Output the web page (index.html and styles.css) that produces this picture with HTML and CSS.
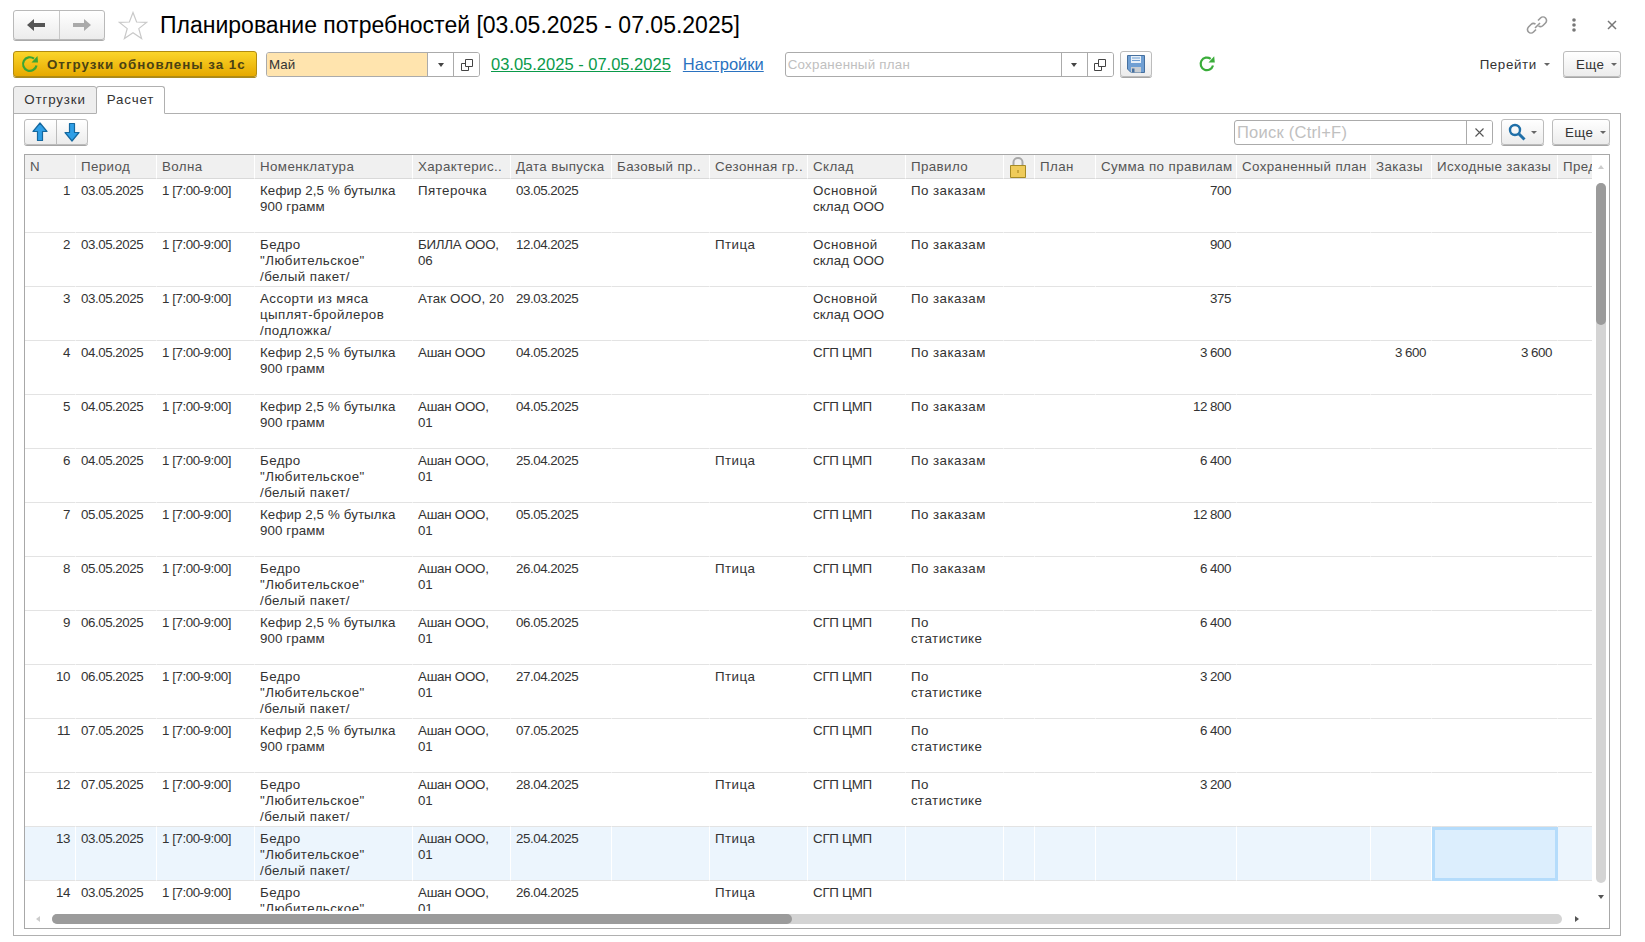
FILE: index.html
```html
<!DOCTYPE html>
<html lang="ru">

<head>
    <meta charset="UTF-8">
    <title>Планирование потребностей</title>
    <link rel="stylesheet" href="styles.css">
</head>

<body>
    <div class="top">
        <div class="navGroup">
            <button class="navBtn">
                <svg width="20" height="14" viewBox="0 0 20 14"><path d="M1 7 8 1v4h11v4H8v4z" fill="#555"/></svg>
            </button>
            <button class="navBtn">
                <svg width="20" height="14" viewBox="0 0 20 14"><path d="M19 7 12 1v4H1v4h11v4z" fill="#aaa"/></svg>
            </button>
        </div>
        <svg class="star" width="30" height="29" viewBox="0 0 30 29"><path d="M15 1.5 18.6 11 28.8 11.3 20.8 17.6 23.6 27.5 15 21.8 6.4 27.5 9.2 17.6 1.2 11.3 11.4 11z" fill="#fff" stroke="#c9c9c9" stroke-width="1.2"/></svg>
        <h1 class="title">Планирование потребностей [03.05.2025 - 07.05.2025]</h1>
        <div class="topIcons">
            <svg width="22" height="20" viewBox="0 0 22 20" fill="none" stroke="#999" stroke-width="1.6"><path d="M9 13 14 8"/><path d="M12 5.5 14.5 3a3.5 3.5 0 0 1 5 5L17 10.500a3.500 3.500 0 0 1-4.500.3"/><path d="M10 14.500 7.500 17a3.500 3.500 0 0 1-5-5L5 9.500a3.500 3.500 0 0 1 4.500-.3"/></svg>
            <svg width="4" height="14" viewBox="0 0 4 14" fill="#777"><circle cx="2" cy="2" r="1.800"/><circle cx="2" cy="7" r="1.800"/><circle cx="2" cy="12" r="1.800"/></svg>
            <svg class="closeIcon" width="10" height="10" viewBox="0 0 10 10" stroke="#777" stroke-width="1.500"><path d="M1 1 9 9M9 1 1 9"/></svg>
        </div>
    </div>

    <div class="toolbar">
        <button class="btnYellow">
            <svg width="18" height="18" viewBox="0 0 18 18" fill="none"><path d="M15.500 10.500A6.800 6.800 0 1 1 13 3.700" stroke="#3aa535" stroke-width="2.200"/><path d="M10.500 7.500 17 7.500 16.500 1z" fill="#3aa535"/></svg>
            Отгрузки обновлены за 1с
        </button>
        <div class="field fieldMay">
            <span class="fieldText">Май</span>
            <span class="fieldBtn"><i class="caret dark"></i></span>
            <span class="fieldBtn copy"><svg width="14" height="14" viewBox="0 0 14 14" fill="#fff" stroke="#444"><path d="M1.500 5.500h7v7h-7z"/><path d="M5.500 1.500h7v7h-7z"/></svg></span>
        </div>
        <a class="link green" href="#">03.05.2025 - 07.05.2025</a>
        <a class="link blue" href="#">Настройки</a>
        <div class="field fieldPlan">
            <span class="fieldText hint">Сохраненный план</span>
            <span class="fieldBtn"><i class="caret dark"></i></span>
            <span class="fieldBtn copy"><svg width="14" height="14" viewBox="0 0 14 14" fill="#fff" stroke="#444"><path d="M1.500 5.500h7v7h-7z"/><path d="M5.500 1.500h7v7h-7z"/></svg></span>
        </div>
        <button class="btn btnSave">
            <svg width="18" height="18" viewBox="0 0 18 18"><path d="M.5.500h17v17H4L.5 14z" fill="#6f9fd3" stroke="#46709f"/><path d="M4 1h10v7H4z" fill="#e6eff8"/><path d="M5 3h8M5 5.500h8" stroke="#6f9fd3"/><path d="M4 12h10v5.500H4z" fill="#c9ced3"/><path d="M5 13.500h2.500v4H5z" fill="#46709f"/></svg>
        </button>
        <svg class="refresh" width="18" height="18" viewBox="0 0 18 18" fill="none"><path d="M15 10.500A6.300 6.300 0 1 1 12.700 3.800" stroke="#3aad3a" stroke-width="2.200"/><path d="M10.500 7.500 16.800 7.500 16.200 1.300z" fill="#3aad3a"/></svg>
        <span class="goTo">Перейти <i class="caret"></i></span>
        <button class="btn btnMore">Еще <i class="caret"></i></button>
    </div>

    <div class="tabs">
        <div class="tab">Отгрузки</div>
        <div class="tab tabActive">Расчет</div>
    </div>

    <div class="panel">
        <div class="panelBar">
            <div class="arrowGroup">
                <button class="arrowBtn">
                    <svg width="16" height="20" viewBox="0 0 16 20"><path d="M8 1 15 9.500h-4.500v9h-5v-9H1z" fill="#2f9fe6" stroke="#14689f" stroke-width="1.200" stroke-linejoin="round"/></svg>
                </button>
                <button class="arrowBtn">
                    <svg width="16" height="20" viewBox="0 0 16 20"><path d="M8 19 15 10.500h-4.500v-9h-5v9H1z" fill="#2f9fe6" stroke="#14689f" stroke-width="1.200" stroke-linejoin="round"/></svg>
                </button>
            </div>
            <div class="field fieldSearch">
                <span class="fieldText hint">Поиск (Ctrl+F)</span>
                <span class="fieldBtn clear"><svg width="9" height="9" viewBox="0 0 9 9" stroke="#555" stroke-width="1.100"><path d="M.5.500l8 8M8.500.500l-8 8"/></svg></span>
            </div>
            <button class="btn btnSearch">
                <svg width="18" height="18" viewBox="0 0 18 18" fill="none" stroke="#1f6fa8"><circle cx="7" cy="7" r="5" stroke-width="2.400"/><path d="M11 11 16.500 16.500" stroke-width="3"/></svg>
                <i class="caret"></i>
            </button>
            <button class="btn btnMore">Еще <i class="caret"></i></button>
        </div>

        <div class="grid">
            <div class="tableWrap">
                <table class="tbl">
                    <colgroup>
                        <col class="c51"><col class="c81"><col class="c98"><col class="c158"><col class="c98"><col class="c101"><col class="c98"><col class="c98"><col class="c98"><col class="c98"><col class="c31"><col class="c61"><col class="c141"><col class="c134"><col class="c61"><col class="c126"><col class="c100">
                    </colgroup>
                    <thead>
                        <tr>
                            <th>N</th><th>Период</th><th>Волна</th><th>Номенклатура</th><th>Характерис..</th><th>Дата выпуска</th><th>Базовый пр..</th><th>Сезонная гр..</th><th>Склад</th><th>Правило</th>
                            <th class="lockCell"><svg width="16" height="21" viewBox="0 0 16 21"><path d="M3.500 9V5a4.500 4 0 0 1 9 0v4" fill="none" stroke="#a8a8a8" stroke-width="2"/><path d="M.5 8.500h15v12H.5z" fill="#efcb5a" stroke="#a58a25"/><path d="M7 13h2v3H7z" fill="#c9a53a"/></svg></th>
                            <th>План</th><th>Сумма по правилам</th><th>Сохраненный план</th><th>Заказы</th><th>Исходные заказы</th><th>Предзаказы</th>
                        </tr>
                    </thead>
                    <tbody>
                        <tr><td class="num">1</td><td class="dg">03.05.2025</td><td class="dg">1 [7:00-9:00]</td><td class="kf">Кефир 2,5 % бутылка<br>900 грамм</td><td>Пятерочка</td><td class="dg">03.05.2025</td><td></td><td></td><td>Основной<br><span class="kf">склад ООО</span></td><td>По заказам</td><td></td><td></td><td class="num">700</td><td></td><td></td><td></td><td></td></tr>
                        <tr><td class="num">2</td><td class="dg">03.05.2025</td><td class="dg">1 [7:00-9:00]</td><td>Бедро<br>"Любительское"<br>/белый пакет/</td><td class="up">БИЛЛА ООО,<br>06</td><td class="dg">12.04.2025</td><td></td><td>Птица</td><td>Основной<br><span class="kf">склад ООО</span></td><td>По заказам</td><td></td><td></td><td class="num">900</td><td></td><td></td><td></td><td></td></tr>
                        <tr><td class="num">3</td><td class="dg">03.05.2025</td><td class="dg">1 [7:00-9:00]</td><td>Ассорти из мяса<br>цыплят-бройлеров<br>/подложка/</td><td class="kf">Атак ООО, 20</td><td class="dg">29.03.2025</td><td></td><td></td><td>Основной<br><span class="kf">склад ООО</span></td><td>По заказам</td><td></td><td></td><td class="num">375</td><td></td><td></td><td></td><td></td></tr>
                        <tr><td class="num">4</td><td class="dg">04.05.2025</td><td class="dg">1 [7:00-9:00]</td><td class="kf">Кефир 2,5 % бутылка<br>900 грамм</td><td class="up">Ашан ООО</td><td class="dg">04.05.2025</td><td></td><td></td><td class="up">СГП ЦМП</td><td>По заказам</td><td></td><td></td><td class="num">3 600</td><td></td><td class="num">3 600</td><td class="num">3 600</td><td></td></tr>
                        <tr><td class="num">5</td><td class="dg">04.05.2025</td><td class="dg">1 [7:00-9:00]</td><td class="kf">Кефир 2,5 % бутылка<br>900 грамм</td><td class="up">Ашан ООО,<br>01</td><td class="dg">04.05.2025</td><td></td><td></td><td class="up">СГП ЦМП</td><td>По заказам</td><td></td><td></td><td class="num">12 800</td><td></td><td></td><td></td><td></td></tr>
                        <tr><td class="num">6</td><td class="dg">04.05.2025</td><td class="dg">1 [7:00-9:00]</td><td>Бедро<br>"Любительское"<br>/белый пакет/</td><td class="up">Ашан ООО,<br>01</td><td class="dg">25.04.2025</td><td></td><td>Птица</td><td class="up">СГП ЦМП</td><td>По заказам</td><td></td><td></td><td class="num">6 400</td><td></td><td></td><td></td><td></td></tr>
                        <tr><td class="num">7</td><td class="dg">05.05.2025</td><td class="dg">1 [7:00-9:00]</td><td class="kf">Кефир 2,5 % бутылка<br>900 грамм</td><td class="up">Ашан ООО,<br>01</td><td class="dg">05.05.2025</td><td></td><td></td><td class="up">СГП ЦМП</td><td>По заказам</td><td></td><td></td><td class="num">12 800</td><td></td><td></td><td></td><td></td></tr>
                        <tr><td class="num">8</td><td class="dg">05.05.2025</td><td class="dg">1 [7:00-9:00]</td><td>Бедро<br>"Любительское"<br>/белый пакет/</td><td class="up">Ашан ООО,<br>01</td><td class="dg">26.04.2025</td><td></td><td>Птица</td><td class="up">СГП ЦМП</td><td>По заказам</td><td></td><td></td><td class="num">6 400</td><td></td><td></td><td></td><td></td></tr>
                        <tr><td class="num">9</td><td class="dg">06.05.2025</td><td class="dg">1 [7:00-9:00]</td><td class="kf">Кефир 2,5 % бутылка<br>900 грамм</td><td class="up">Ашан ООО,<br>01</td><td class="dg">06.05.2025</td><td></td><td></td><td class="up">СГП ЦМП</td><td>По<br>статистике</td><td></td><td></td><td class="num">6 400</td><td></td><td></td><td></td><td></td></tr>
                        <tr><td class="num">10</td><td class="dg">06.05.2025</td><td class="dg">1 [7:00-9:00]</td><td>Бедро<br>"Любительское"<br>/белый пакет/</td><td class="up">Ашан ООО,<br>01</td><td class="dg">27.04.2025</td><td></td><td>Птица</td><td class="up">СГП ЦМП</td><td>По<br>статистике</td><td></td><td></td><td class="num">3 200</td><td></td><td></td><td></td><td></td></tr>
                        <tr><td class="num">11</td><td class="dg">07.05.2025</td><td class="dg">1 [7:00-9:00]</td><td class="kf">Кефир 2,5 % бутылка<br>900 грамм</td><td class="up">Ашан ООО,<br>01</td><td class="dg">07.05.2025</td><td></td><td></td><td class="up">СГП ЦМП</td><td>По<br>статистике</td><td></td><td></td><td class="num">6 400</td><td></td><td></td><td></td><td></td></tr>
                        <tr><td class="num">12</td><td class="dg">07.05.2025</td><td class="dg">1 [7:00-9:00]</td><td>Бедро<br>"Любительское"<br>/белый пакет/</td><td class="up">Ашан ООО,<br>01</td><td class="dg">28.04.2025</td><td></td><td>Птица</td><td class="up">СГП ЦМП</td><td>По<br>статистике</td><td></td><td></td><td class="num">3 200</td><td></td><td></td><td></td><td></td></tr>
                        <tr class="current"><td class="num">13</td><td class="dg">03.05.2025</td><td class="dg">1 [7:00-9:00]</td><td>Бедро<br>"Любительское"<br>/белый пакет/</td><td class="up">Ашан ООО,<br>01</td><td class="dg">25.04.2025</td><td></td><td>Птица</td><td class="up">СГП ЦМП</td><td></td><td></td><td></td><td></td><td></td><td></td><td class="selected"></td><td></td></tr>
                        <tr><td class="num">14</td><td class="dg">03.05.2025</td><td class="dg">1 [7:00-9:00]</td><td>Бедро<br>"Любительское"<br>/белый пакет/</td><td class="up">Ашан ООО,<br>01</td><td class="dg">26.04.2025</td><td></td><td>Птица</td><td class="up">СГП ЦМП</td><td></td><td></td><td></td><td></td><td></td><td></td><td></td><td></td></tr>
                    </tbody>
                </table>
            </div>
            <div class="vScroll">
                <i class="tri triUp"></i>
                <div class="vTrack"><div class="vThumb"></div></div>
                <i class="tri triDown"></i>
            </div>
            <div class="hScroll">
                <i class="tri triLeft"></i>
                <div class="hTrack"><div class="hThumb"></div></div>
                <i class="tri triRight"></i>
            </div>
        </div>
    </div>
</body>

</html>
```

FILE: styles.css
```css
* {
    margin: 0;
    padding: 0;
    box-sizing: border-box;
}

body {
    display: flex;
    flex-direction: column;
    height: 942px;
    overflow: hidden;
    background-color: #FFF;
    font-family: "Liberation Sans", Arial, sans-serif;
    font-size: 13.33px;
    color: #333;
}

button {
    font-family: inherit;
    font-size: inherit;
    color: inherit;
}

.top {
    display: flex;
    align-items: center;
    height: 30px;
    margin: 10px 0 0 13px;
}

.navGroup {
    display: flex;
    width: 92px;
    height: 30px;
    border: 1px solid #b9b9b9;
    border-radius: 3px;
    box-shadow: 0 1px 0 #aaa;
    background: linear-gradient(#FFF, #ececec);
}

.navBtn {
    flex: 1;
    display: flex;
    align-items: center;
    justify-content: center;
    border: 0;
    background: none;
}

.navBtn + .navBtn {
    border-left: 1px solid #c8c8c8;
}

.star {
    margin-left: 13px;
}

.title {
    margin-left: 12px;
    font-size: 23px;
    font-weight: normal;
    color: #000;
    white-space: nowrap;
}

.topIcons {
    display: flex;
    align-items: center;
    gap: 24px;
    margin-left: auto;
    padding-right: 28px;
}

.closeIcon {
    margin-left: 7px;
}

.toolbar {
    display: flex;
    align-items: center;
    height: 26px;
    margin: 11px 24px 0 13px;
}

.btnYellow {
    display: flex;
    align-items: center;
    gap: 8px;
    width: 244px;
    height: 26px;
    padding-left: 7px;
    border: 1px solid #b28c10;
    border-radius: 3px;
    background: linear-gradient(#fbd52b, #e6a900);
    box-shadow: 0 1px 0 #a98a20;
    font-weight: bold;
    color: #4a4213;
    letter-spacing: 1px;
    white-space: nowrap;
}

.field {
    display: flex;
    align-items: center;
    align-self: flex-end;
    height: 25px;
    border: 1px solid #ababab;
    border-radius: 3px;
    background-color: #FFF;
    overflow: hidden;
}

.fieldText {
    flex: 1;
    padding-left: 2px;
    white-space: nowrap;
}

.hint {
    color: #c0c0c0;
    letter-spacing: 0.25px;
}

.fieldBtn {
    display: flex;
    align-items: center;
    justify-content: center;
    height: 100%;
    width: 26px;
    border-left: 1px solid #ababab;
    background-color: #FFF;
}

.fieldMay {
    width: 214px;
    margin-left: 9px;
}

.fieldMay .fieldText {
    height: 100%;
    line-height: 23px;
    background-color: #ffe4ae;
}

.link {
    font-size: 16.5px;
    white-space: nowrap;
}

.green {
    margin-left: 11px;
    color: #0a9a4a;
}

.blue {
    margin-left: 12px;
    color: #2a72c0;
}

.fieldPlan {
    width: 329px;
    margin-left: 21px;
}

.btn {
    display: flex;
    align-items: center;
    justify-content: center;
    height: 26px;
    border: 1px solid #bcbcbc;
    border-radius: 3px;
    background: linear-gradient(#FFF, #ececec);
    box-shadow: 0 1px 0 #a5a5a5;
}

.btnSave {
    width: 32px;
    margin-left: 6px;
}

.refresh {
    margin-left: 46px;
}

.goTo {
    margin-left: auto;
    letter-spacing: 0.6px;
    white-space: nowrap;
}

.btnMore {
    justify-content: flex-start;
    width: 58px;
    margin-left: 13px;
    padding-left: 12px;
    letter-spacing: 0.4px;
}

.btnMore .caret {
    margin-left: 7px;
}

.caret {
    display: inline-block;
    vertical-align: middle;
    margin-left: 3px;
    border-left: 3px solid transparent;
    border-right: 3px solid transparent;
    border-top: 3px solid #666;
}

.caret.dark {
    margin-left: 0;
    border-top: 4px solid #444;
}

.tabs {
    display: flex;
    height: 28px;
    margin: 9px 0 -1px 13px;
}

.tab {
    display: flex;
    align-items: center;
    justify-content: center;
    width: 84px;
    padding-bottom: 2px;
    border: 1px solid #b0b0b0;
    border-radius: 3px 3px 0 0;
    background-color: #eee;
    letter-spacing: 0.85px;
}

.tabActive {
    position: relative;
    width: 69px;
    margin-left: -1px;
    border-bottom-color: #FFF;
    background-color: #FFF;
}

.panel {
    flex: 1;
    display: flex;
    flex-direction: column;
    min-height: 0;
    margin: 0 24px 6px 13px;
    padding: 5px 10px 6px;
    border: 1px solid #b0b0b0;
}

.panelBar {
    display: flex;
    align-items: center;
    height: 26px;
    flex-shrink: 0;
}

.arrowGroup {
    display: flex;
    width: 64px;
    height: 26px;
    border: 1px solid #bcbcbc;
    border-radius: 3px;
    background: linear-gradient(#FFF, #ececec);
    box-shadow: 0 1px 0 #a5a5a5;
}

.arrowBtn {
    flex: 1;
    display: flex;
    align-items: center;
    justify-content: center;
    border: 0;
    background: none;
}

.arrowBtn + .arrowBtn {
    border-left: 1px solid #bcbcbc;
}

.fieldSearch {
    width: 259px;
    margin-left: auto;
    font-size: 16.5px;
}

.clear {
    width: 26px;
}

.btnSearch {
    gap: 2px;
    width: 43px;
    margin-left: 8px;
}

.panelBar .btnMore {
    margin-left: 8px;
}

.grid {
    flex: 1;
    display: grid;
    grid-template-columns: 1fr 17px;
    grid-template-rows: 1fr 17px;
    min-height: 0;
    margin-top: 9px;
    border: 1px solid #a8a8a8;
}

.tableWrap {
    overflow: hidden;
    min-width: 0;
    min-height: 0;
}

.tbl {
    table-layout: fixed;
    width: 1632px;
    border-collapse: separate;
    border-spacing: 0;
}

.c31 { width: 31px; }
.c51 { width: 51px; }
.c61 { width: 61px; }
.c81 { width: 81px; }
.c98 { width: 98px; }
.c100 { width: 100px; }
.c101 { width: 101px; }
.c126 { width: 126px; }
.c134 { width: 134px; }
.c141 { width: 141px; }
.c158 { width: 158px; }

.tbl th {
    height: 24px;
    padding: 0 0 0 5px;
    background-color: #f0f0f0;
    border-right: 1px solid #FFF;
    border-bottom: 1px solid #d9d9d9;
    font-weight: normal;
    text-align: left;
    color: #555;
    letter-spacing: 0.4px;
    white-space: nowrap;
    overflow: hidden;
}

.tbl th.lockCell {
    padding: 2px 0 0 6px;
}

.lockCell svg {
    display: block;
}

.tbl td {
    height: 54px;
    padding: 4px 5px 0;
    border-right: 1px solid transparent;
    border-bottom: 1px solid #e3e3e3;
    vertical-align: top;
    line-height: 16px;
    letter-spacing: 0.45px;
    white-space: nowrap;
    overflow: hidden;
}

.tbl td.num {
    text-align: right;
    letter-spacing: -0.45px;
}

.tbl td.dg {
    letter-spacing: -0.45px;
}

.tbl td.up {
    letter-spacing: -0.25px;
}

.tbl .kf {
    letter-spacing: 0.1px;
}

.current td {
    background-color: #ecf5fd;
    border-right-color: #FFF;
}

.tbl .current td.selected {
    border: 3px solid #b5dcfb;
    background-color: #dceefd;
}

.vScroll {
    display: flex;
    flex-direction: column;
    align-items: center;
}

.vTrack {
    width: 10px;
    height: 700px;
    margin-top: 14px;
    border-radius: 5px;
    background-color: #d4d4d4;
}

.vThumb {
    height: 142px;
    border-radius: 5px;
    background-color: #9b9b9b;
}

.hScroll {
    grid-column: 1 / -1;
    display: flex;
    align-items: center;
    padding-bottom: 1px;
}

.hTrack {
    width: 1510px;
    height: 10px;
    margin-left: 12px;
    border-radius: 5px;
    background-color: #d4d4d4;
}

.hThumb {
    width: 740px;
    height: 10px;
    border-radius: 5px;
    background-color: #9b9b9b;
}

.tri {
    display: block;
    width: 0;
    height: 0;
    flex-shrink: 0;
}

.triUp {
    margin-top: 10px;
    border-left: 3px solid transparent;
    border-right: 3px solid transparent;
    border-bottom: 4px solid #ccc;
}

.triDown {
    margin-top: 12px;
    border-left: 3px solid transparent;
    border-right: 3px solid transparent;
    border-top: 4px solid #555;
}

.triLeft {
    margin-left: 11px;
    border-top: 3px solid transparent;
    border-bottom: 3px solid transparent;
    border-right: 4px solid #ccc;
}

.triRight {
    margin-left: 13px;
    border-top: 3px solid transparent;
    border-bottom: 3px solid transparent;
    border-left: 4px solid #555;
}
```
